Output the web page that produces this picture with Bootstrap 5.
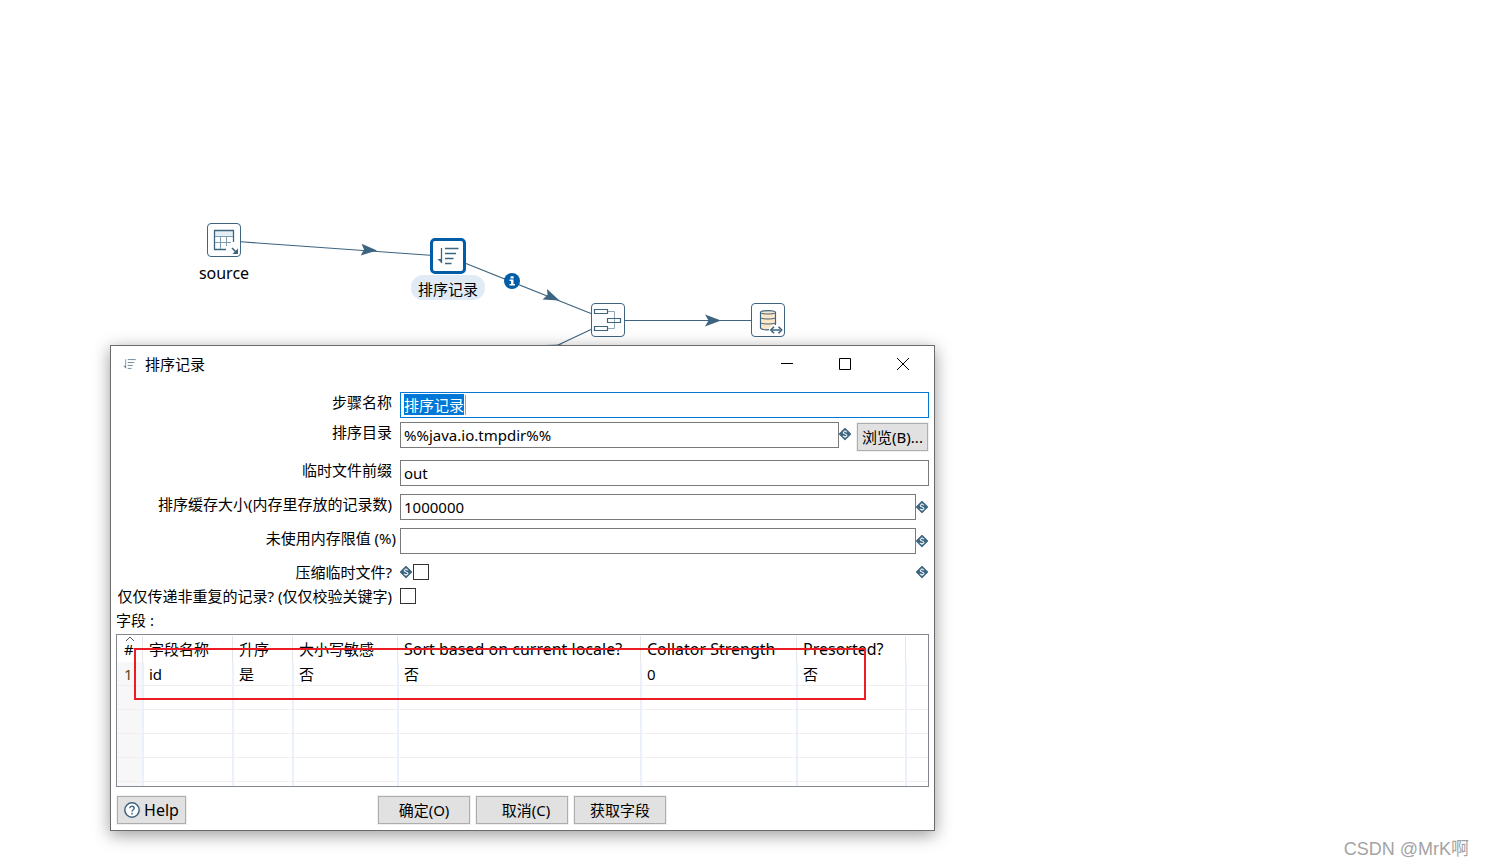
<!DOCTYPE html>
<html lang="zh-CN">
<head>
<meta charset="utf-8">
<meta name="viewport" content="width=device-width, initial-scale=1">
<title>排序记录</title>
<link href="https://cdn.jsdelivr.net/npm/bootstrap@5.3.0/dist/css/bootstrap.min.css" rel="stylesheet">
<style>
  :root { --steel: #3d6480; --accent: #005da6; --line: #7a7a7a; }
  body { font-family: "Noto Sans", "Noto Sans CJK SC", sans-serif; font-size: 15px; line-height: 20px; color: #000; background: #fff; }
  .latin { font-size: 16px; }
  .stage { min-height: 100vh; }
  .hops { left: 0; top: 0; }
  .step { width: 100px; }
  .step-box { width: 34px; height: 34px; border: 1px solid var(--steel); border-radius: 4px; background: #fff; }
  .step-box.picked { width: 36px; height: 36px; border: 3px solid var(--accent); border-radius: 5px; }
  .step-name { padding: 2px 7px; border-radius: 12px; margin-top: 4px; }
  .step-name.picked { background: #e1ebf5; margin-top: 1px; padding-top: 4px; padding-bottom: 1px; }

  .window { left: 110px; top: 345px; width: 825px; border: 1px solid #6b6b6b; background: #fff; box-shadow: 0 4px 16px rgba(0,0,0,.4); padding: 0 5px 6px; }
  .title-bar { height: 36px; padding-left: 7px; margin-right: -3px; margin-bottom: 10px; gap: 9px; }
  .title-bar h1 { font-size: 15px; line-height: 20px; }
  .win-btn { width: 58px; height: 36px; border: 0; background: none; padding: 0; }
  .form-line { min-height: 26px; margin-bottom: 8px; }
  .form-line.tight { margin-bottom: 4px; }
  .form-line.tall { min-height: 30px; }
  .form-line.last-line { margin-bottom: 6px; }
  .form-line > label, .caption-col { width: 280px; flex: none; text-align: right; padding-right: 4px; }
  .form-line > label.wide { padding-right: 0; }
  .form-line > .field { margin-left: 4px; flex: 1; min-width: 0; }
  .form-control.flat { height: 26px; border: 1px solid var(--line); border-radius: 0; padding: 0 3px; font-size: 15px; line-height: 22px; color: #000; box-shadow: none; }
  .form-control.flat.active { border-color: #0078d7; background: linear-gradient(#ff8c1a, #ff8c1a) 64px 2px / 1px 20px no-repeat #fff; padding-bottom: 2px; }
  .form-control.flat::selection { background: #0078d7; color: #fff; }
  .check-line { height: 24px; }
  .form-check-input.flat { width: 16px; height: 16px; margin: 0; border: 1px solid #333; border-radius: 0; }
  .var { width: 13px; height: 13px; flex: none; }
  .browse-field .var { margin-top: 6px; }
  .push { background: #e1e1e1; border: 1px solid #adadad; border-radius: 0; outline: 1px solid #f0f0f0; height: 28px; padding: 0; font-size: 15px; line-height: 20px; color: #000; width: 92px; }
  .push:hover { background: #e5f1fb; }
  .push.browse { width: 71px; margin: auto 1px 1px 5px; flex: none; }
  .push.help { width: 69px; font-size: 16px; margin-left: 1px; }
  .actions { gap: 6px; }
  .footer-line { padding-right: 1px; }
  .grid-frame { border: 1px solid #828790; margin-top: 2px; margin-bottom: 9px; }
  .data-grid { table-layout: fixed; width: 100%; border-collapse: separate; border-spacing: 0; }
  .data-grid th, .data-grid td { padding: 0 0 0 5px; white-space: nowrap; font-weight: 400; line-height: 20px; }
  .data-grid th { height: 27px; padding-top: 1px; background: linear-gradient(#e5e5e5, #e5e5e5) right 1px top 1px / 1px 100% no-repeat; }
  .data-grid td { height: 24px; border-right: 2px solid #ebf1fa; border-bottom: 1px solid #efefef; }
  .data-grid td:first-child { background: #f7f7f7; }
  .data-grid td:last-child { border-right: 0; }
  .data-grid th:last-child { background: none; }
  .data-grid .rownum { padding-left: 7px; }
  .data-grid td.rownum { color: #5a4a1c; }
  .data-grid .stub td { height: 4px; border-bottom: 0; line-height: 0; }
  .sort-caret { left: 8px; top: 1px; }
  .callout-box { left: 17px; top: 13px; right: 62px; height: 52px; border: 2px solid #ed1c24; pointer-events: none; }
  .watermark { right: 16px; bottom: 8px; font: 18px/22px "Liberation Sans", "Noto Sans CJK SC", sans-serif; color: #a3a3a3; }
</style>
</head>
<body>
<svg class="d-none">
  <symbol id="var-mark" viewBox="0 0 13 13">
    <path d="M6 .5 11.500 6 6 11.500.5 6z" fill="#3d6480" stroke="#3d6480" stroke-width="1.200" stroke-linejoin="round"/>
    <path d="M7.900 4.300C7.400 3.200 4.300 3.200 4.300 4.700c0 1.700 3.600.9 3.600 2.700 0 1.600-3.200 1.600-3.900.3M6 2.200v1.300M6 8.700v1.300" fill="none" stroke="#e3ecf2" stroke-width="1.200"/>
  </symbol>
  <symbol id="sort-mark" viewBox="0 0 22 18">
    <path d="M4.500 1v15" stroke="#3d6480" stroke-width="1.300" fill="none"/>
    <path d="M.5 12l4.500 4.500V12z" fill="#3d6480"/>
    <path d="M8 1.500h13.500M8 6.500h11M8 11.500h8.500M8 16.500h6.500" stroke="#3d6480" stroke-width="1.500" fill="none"/>
  </symbol>
</svg>

<main class="stage position-relative overflow-hidden">
  <!-- Hops between the steps -->
  <svg class="hops position-absolute" width="900" height="360" aria-hidden="true">
    <g stroke="#3d6480" stroke-width="1.100" fill="none">
      <path d="M241 241.800 430 255.200M466 263.500 591 313.500M625 320.500H751M591 329.500 556 346"/>
    </g>
    <g fill="#3d6480">
      <path d="M377 250.500 360.700 255.500 364 249.600 361.600 243.700z"/>
      <path d="M559.500 300.500 542.500 299.500 547.500 295 547 289z"/>
      <path d="M721 320.500 705 326.500 708.500 320.500 705 314.500z"/>
      <path d="M562 344.500 545 345 550 349 552 355z"/>
    </g>
    <circle cx="512" cy="281" r="8" fill="#005da6"/>
    <path d="M510.600 276.200h3v2.300h-3zM509.500 279.500h4v4.500h1.500v1.500h-5.500V284h1.500v-3h-1.500z" fill="#fff"/>
  </svg>

  <!-- Steps -->
  <div class="step position-absolute d-flex flex-column align-items-center" style="left:174px;top:223px">
    <div class="step-box">
      <svg class="d-block" width="32" height="32" viewBox="0 0 32 32" fill="none" stroke="#3d6480">
        <path d="M7 7h18v5H7z" fill="#e3eef5" stroke="none"/>
        <path d="M18 25.500H6.500v-19h19V18" stroke-width="1.300"/>
        <path d="M7 12.500h18M7 18.500h16M12.500 12.500V25M18.500 12.500V22" stroke="#7f9db1"/>
        <path d="M24 24l5 5" stroke-width="1.600"/><path d="M30 24.500V30h-5.500z" fill="#3d6480" stroke="none"/>
      </svg>
    </div>
    <div class="step-name latin">source</div>
  </div>
  <div class="step position-absolute d-flex flex-column align-items-center" style="left:398px;top:238px">
    <div class="step-box picked d-flex align-items-center justify-content-center">
      <svg width="22" height="18"><use href="#sort-mark"/></svg>
    </div>
    <div class="step-name picked text-nowrap">排序记录</div>
  </div>
  <div class="step position-absolute d-flex flex-column align-items-center" style="left:558px;top:303px">
    <div class="step-box">
      <svg class="d-block" width="32" height="32" viewBox="0 0 32 32" fill="none" stroke="#3d6480">
        <path d="M16 7.500h6.500v17H16" stroke="#8fa8b8"/>
        <g stroke-width="1.200"><path d="M2.500 5.500h13v4h-13zM15.500 14.500h13v4h-13zM2.500 22.500h13v4h-13z" fill="#fff"/></g>
        <path d="M22.500 15v3" stroke="#8fa8b8"/>
      </svg>
    </div>
  </div>
  <div class="step position-absolute d-flex flex-column align-items-center" style="left:718px;top:303px">
    <div class="step-box">
      <svg class="d-block" width="32" height="32" viewBox="0 0 32 32" fill="none" stroke="#3d6480">
        <path d="M8.500 8.500c0-2.600 15-2.600 15 0V21H20l-3.500 4.500c-4 .6-8 0-8-1.700z" fill="#fbe6c8" stroke="none"/>
        <path d="M17 25.700c-4.500.4-8.500-.3-8.500-1.900V8.500c0-2.600 15-2.600 15 0V21" stroke-width="1.200"/>
        <path d="M8.500 8.500c0 2 15 2 15 0M8.500 13.500c0 2 15 2 15 0M8.500 18.500c0 2 15 2 15 0"/>
        <path d="M20 26h8" stroke-width="1.500"/><path d="M22 22.700 18.800 26 22 29.300M26.500 22.700 29.700 26 26.500 29.300" stroke-width="1.600"/>
      </svg>
    </div>
  </div>

  <!-- Step settings window -->
  <form class="window position-absolute" onsubmit="return false">
    <header class="title-bar d-flex align-items-center">
      <svg width="13" height="12" opacity=".8"><use href="#sort-mark"/></svg>
      <h1 class="mb-0 me-auto fw-normal">排序记录</h1>
      <div class="d-flex">
        <button type="button" class="win-btn" aria-label="最小化"><svg class="d-block mx-auto" width="14" height="14" stroke="#000"><path d="M1 6.500h12"/></svg></button>
        <button type="button" class="win-btn" aria-label="最大化"><svg class="d-block mx-auto" width="14" height="14" stroke="#000" fill="none"><path d="M1.500 1.500h11v11h-11z"/></svg></button>
        <button type="button" class="win-btn" aria-label="关闭"><svg class="d-block mx-auto" width="14" height="14" stroke="#000"><path d="M1 1l12 12M13 1 1 13"/></svg></button>
      </div>
    </header>

    <div class="form-line tight d-flex">
      <label for="stepName">步骤名称</label>
      <div class="field"><input id="stepName" class="form-control flat active" type="text" value="排序记录"></div>
    </div>
    <div class="form-line tall d-flex">
      <label for="sortDir">排序目录</label>
      <div class="field browse-field d-flex">
        <input id="sortDir" class="form-control flat" type="text" value="%%java.io.tmpdir%%">
        <svg class="var"><use href="#var-mark"/></svg>
        <button type="button" class="push browse">浏览(B)...</button>
      </div>
    </div>
    <div class="form-line d-flex">
      <label for="prefix">临时文件前缀</label>
      <div class="field"><input id="prefix" class="form-control flat" type="text" value="out"></div>
    </div>
    <div class="form-line d-flex">
      <label for="cacheSize">排序缓存大小(内存里存放的记录数)</label>
      <div class="field d-flex align-items-center"><input id="cacheSize" class="form-control flat" type="text" value="1000000"><svg class="var"><use href="#var-mark"/></svg></div>
    </div>
    <div class="form-line last-line d-flex">
      <label class="wide" for="memLimit">未使用内存限值 (%)</label>
      <div class="field d-flex align-items-center"><input id="memLimit" class="form-control flat" type="text"><svg class="var"><use href="#var-mark"/></svg></div>
    </div>
    <div class="check-line d-flex align-items-center">
      <label class="caption-col" for="compress">压缩临时文件?</label>
      <svg class="var ms-1"><use href="#var-mark"/></svg>
      <input id="compress" class="form-check-input flat" type="checkbox">
      <svg class="var ms-auto"><use href="#var-mark"/></svg>
    </div>
    <div class="check-line d-flex align-items-center">
      <label class="caption-col text-nowrap" for="unique">仅仅传递非重复的记录? (仅仅校验关键字)</label>
      <input id="unique" class="form-check-input flat ms-1" type="checkbox">
    </div>
    <div class="check-line d-flex align-items-center" id="fieldsCaption">字段 :</div>

    <div class="grid-frame position-relative">
      <table class="data-grid" aria-labelledby="fieldsCaption">
        <colgroup><col style="width:27px"><col style="width:90px"><col style="width:60px"><col style="width:105px"><col style="width:243px"><col style="width:156px"><col style="width:109px"><col></colgroup>
        <thead><tr><th class="rownum">#</th><th>字段名称</th><th>升序</th><th>大小写敏感</th><th class="latin">Sort based on current locale?</th><th class="latin">Collator Strength</th><th class="latin">Presorted?</th><th></th></tr></thead>
        <tbody>
          <tr><td class="rownum">1</td><td>id</td><td>是</td><td>否</td><td>否</td><td>0</td><td>否</td><td></td></tr>
          <tr><td></td><td></td><td></td><td></td><td></td><td></td><td></td><td></td></tr>
          <tr><td></td><td></td><td></td><td></td><td></td><td></td><td></td><td></td></tr>
          <tr><td></td><td></td><td></td><td></td><td></td><td></td><td></td><td></td></tr>
          <tr><td></td><td></td><td></td><td></td><td></td><td></td><td></td><td></td></tr>
          <tr class="stub"><td></td><td></td><td></td><td></td><td></td><td></td><td></td><td></td></tr>
        </tbody>
      </table>
      <svg class="sort-caret position-absolute" width="10" height="6" fill="none" stroke="#555"><path d="M1 5l4-4 4 4"/></svg>
      <div class="callout-box position-absolute"></div>
    </div>

    <footer class="footer-line row g-0">
      <div class="col"><button type="button" class="push help d-flex align-items-center justify-content-center gap-1">
        <svg width="16" height="16" fill="none" stroke="#3d6480"><circle cx="8" cy="8" r="7.200" fill="#fff" stroke-width="1.500"/><path d="M5.800 6.300c0-2.800 4.400-2.700 4.400 0C10.200 7.800 8 7.800 8 9.600M8 10.800v1.600" stroke-width="1.400"/></svg>Help</button></div>
      <div class="col-auto d-flex actions">
        <button type="submit" class="push">确定(O)</button>
        <button type="button" class="push">&nbsp;&nbsp;取消(C)</button>
        <button type="button" class="push">获取字段</button>
      </div>
      <div class="col"></div>
    </footer>
  </form>

  <div class="watermark position-absolute">CSDN @MrK啊</div>
</main>
<script src="https://cdn.jsdelivr.net/npm/bootstrap@5.3.0/dist/js/bootstrap.bundle.min.js"></script>
<script>
  const stepName = document.getElementById('stepName');
  stepName.focus();
  stepName.select();
</script>
</body>
</html>
